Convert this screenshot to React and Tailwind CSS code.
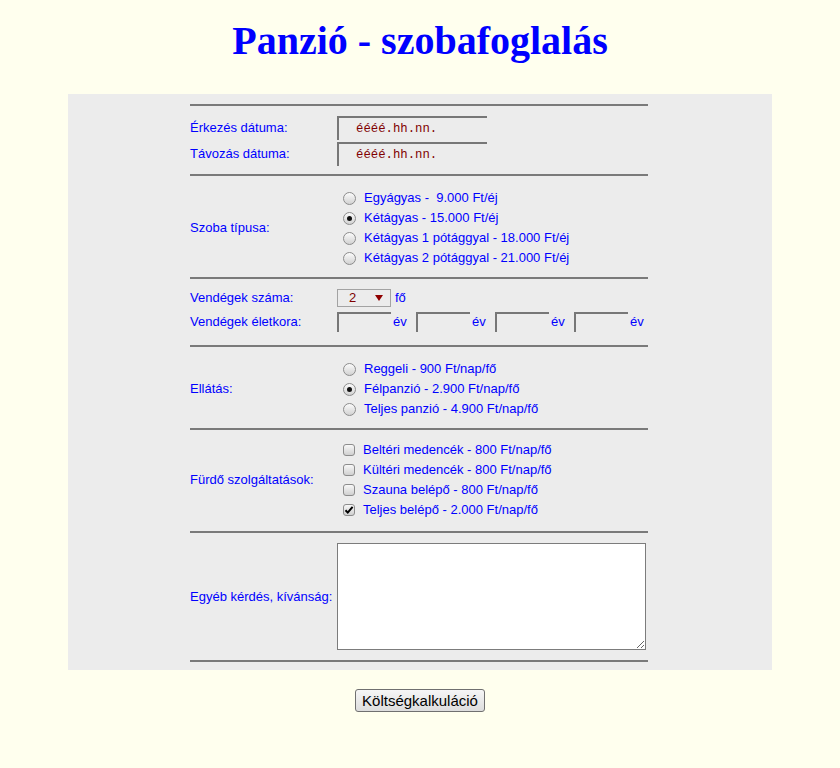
import React from 'react';

const Hr = () => <div className="h-[2px] border-t-2 border-[#7a7a7a]" />;

const Row = ({ label, children, className = '' }) => (
  <div className={`flex items-center ${className}`}>
    <div className="w-[147px] shrink-0">{label}</div>
    <div className="flex-1">{children}</div>
  </div>
);

const Radio = ({ checked }) => (
  <span className="w-[13px] h-[13px] rounded-full border border-[#8c8c8c] bg-linear-to-b from-[#fbfbfb] to-[#d2d2d2] flex items-center justify-center shrink-0">
    {checked && <span className="w-[5px] h-[5px] rounded-full bg-[#111]" />}
  </span>
);

const Check = ({ checked }) => (
  <span className="w-[12px] h-[12px] rounded-[3px] border border-[#8c8c8c] bg-linear-to-b from-[#f8f8f8] to-[#d0d0d0] flex items-center justify-center shrink-0">
    {checked && (
      <svg width="10" height="10" viewBox="0 0 10 10">
        <path d="M1.5 5.2 L3.8 7.6 L8.6 1.8" fill="none" stroke="#000" strokeWidth="2" />
      </svg>
    )}
  </span>
);

const Option = ({ children, control }) => (
  <div className="h-[20px] flex items-center">
    <span className="ml-[6px] mr-[8px] flex">{control}</span>
    <span className="whitespace-pre">{children}</span>
  </div>
);

const DateBox = () => (
  <div className="w-[150px] h-[24px] border-t-2 border-l-2 border-[#777] flex items-center pl-[17px] font-['Liberation_Mono',monospace] text-[12.3px] text-[#800000]">
    éééé.hh.nn.
  </div>
);

const AgeBox = () => (
  <div className="w-[79px] flex items-center shrink-0">
    <div className="w-[54px] h-[20px] border-t-2 border-l-2 border-[#777]" />
    <span className="ml-[2px]">év</span>
  </div>
);

export default function App() {
  const rooms = [
    ['Egyágyas -  9.000 Ft/éj', false],
    ['Kétágyas - 15.000 Ft/éj', true],
    ['Kétágyas 1 pótággyal - 18.000 Ft/éj', false],
    ['Kétágyas 2 pótággyal - 21.000 Ft/éj', false],
  ];
  const meals = [
    ['Reggeli - 900 Ft/nap/fő', false],
    ['Félpanzió - 2.900 Ft/nap/fő', true],
    ['Teljes panzió - 4.900 Ft/nap/fő', false],
  ];
  const spa = [
    ['Beltéri medencék - 800 Ft/nap/fő', false],
    ['Kültéri medencék - 800 Ft/nap/fő', false],
    ['Szauna belépő - 800 Ft/nap/fő', false],
    ['Teljes belépő - 2.000 Ft/nap/fő', true],
  ];

  return (
    <div className="min-h-[768px] bg-[#ffffee] pt-[18px] pb-[40px] font-['Liberation_Sans',Arial,sans-serif] text-[13px] text-[#0000ff]">
      <h1 className="text-center font-['Liberation_Serif','Times_New_Roman',serif] font-bold text-[40px] leading-[46px] text-[#0000ff] mb-[30px]">
        Panzió - szobafoglalás
      </h1>

      <div className="w-[704px] mx-auto bg-[#ececec] pt-[10px] pb-[8px]">
        <div className="w-[458px] ml-[122px]">
          <Hr />
          <div className="pt-[10px] pb-[8px] flex flex-col gap-[2px]">
            <Row label="Érkezés dátuma:" className="h-[24px]"><DateBox /></Row>
            <Row label="Távozás dátuma:" className="h-[24px]"><DateBox /></Row>
          </div>

          <Hr />
          <div className="pt-[12px] pb-[9px]">
            <Row label="Szoba típusa:">
              {rooms.map(([t, c]) => (
                <Option key={t} control={<Radio checked={c} />}>{t}</Option>
              ))}
            </Row>
          </div>

          <Hr />
          <div className="pt-[9px] pb-[13px] flex flex-col gap-[4px]">
            <Row label="Vendégek száma:" className="h-[20px]">
              <div className="flex items-center">
                <div className="w-[54px] h-[18px] border border-[#a3a3a3] flex items-center justify-between pl-[11px] pr-[7px] text-[#800000]">
                  <span>2</span>
                  <svg width="8" height="6" viewBox="0 0 8 6"><path d="M0 0 H8 L4 6 Z" fill="#900000" /></svg>
                </div>
                <span className="ml-[4px]">fő</span>
              </div>
            </Row>
            <Row label="Vendégek életkora:" className="h-[20px]">
              <div className="flex">
                <AgeBox /><AgeBox /><AgeBox /><AgeBox />
              </div>
            </Row>
          </div>

          <Hr />
          <div className="pt-[12px] pb-[9px]">
            <Row label="Ellátás:">
              {meals.map(([t, c]) => (
                <Option key={t} control={<Radio checked={c} />}>{t}</Option>
              ))}
            </Row>
          </div>

          <Hr />
          <div className="pt-[10px] pb-[11px]">
            <Row label="Fürdő szolgáltatások:">
              {spa.map(([t, c]) => (
                <Option key={t} control={<Check checked={c} />}>{t}</Option>
              ))}
            </Row>
          </div>

          <Hr />
          <div className="pt-[10px] pb-[10px]">
            <Row label="Egyéb kérdés, kívánság:">
              <textarea className="block w-[309px] h-[107px] bg-white border border-[#7c7c7c] resize outline-none" />
            </Row>
          </div>
          <Hr />
        </div>
      </div>

      <div className="flex justify-center mt-[19px]">
        <button className="w-[130px] h-[23px] rounded-[3px] border border-[#707070] bg-linear-to-b from-[#f6f6f6] to-[#dddddd] text-[15px] leading-none text-black">
          Költségkalkuláció
        </button>
      </div>
    </div>
  );
}
